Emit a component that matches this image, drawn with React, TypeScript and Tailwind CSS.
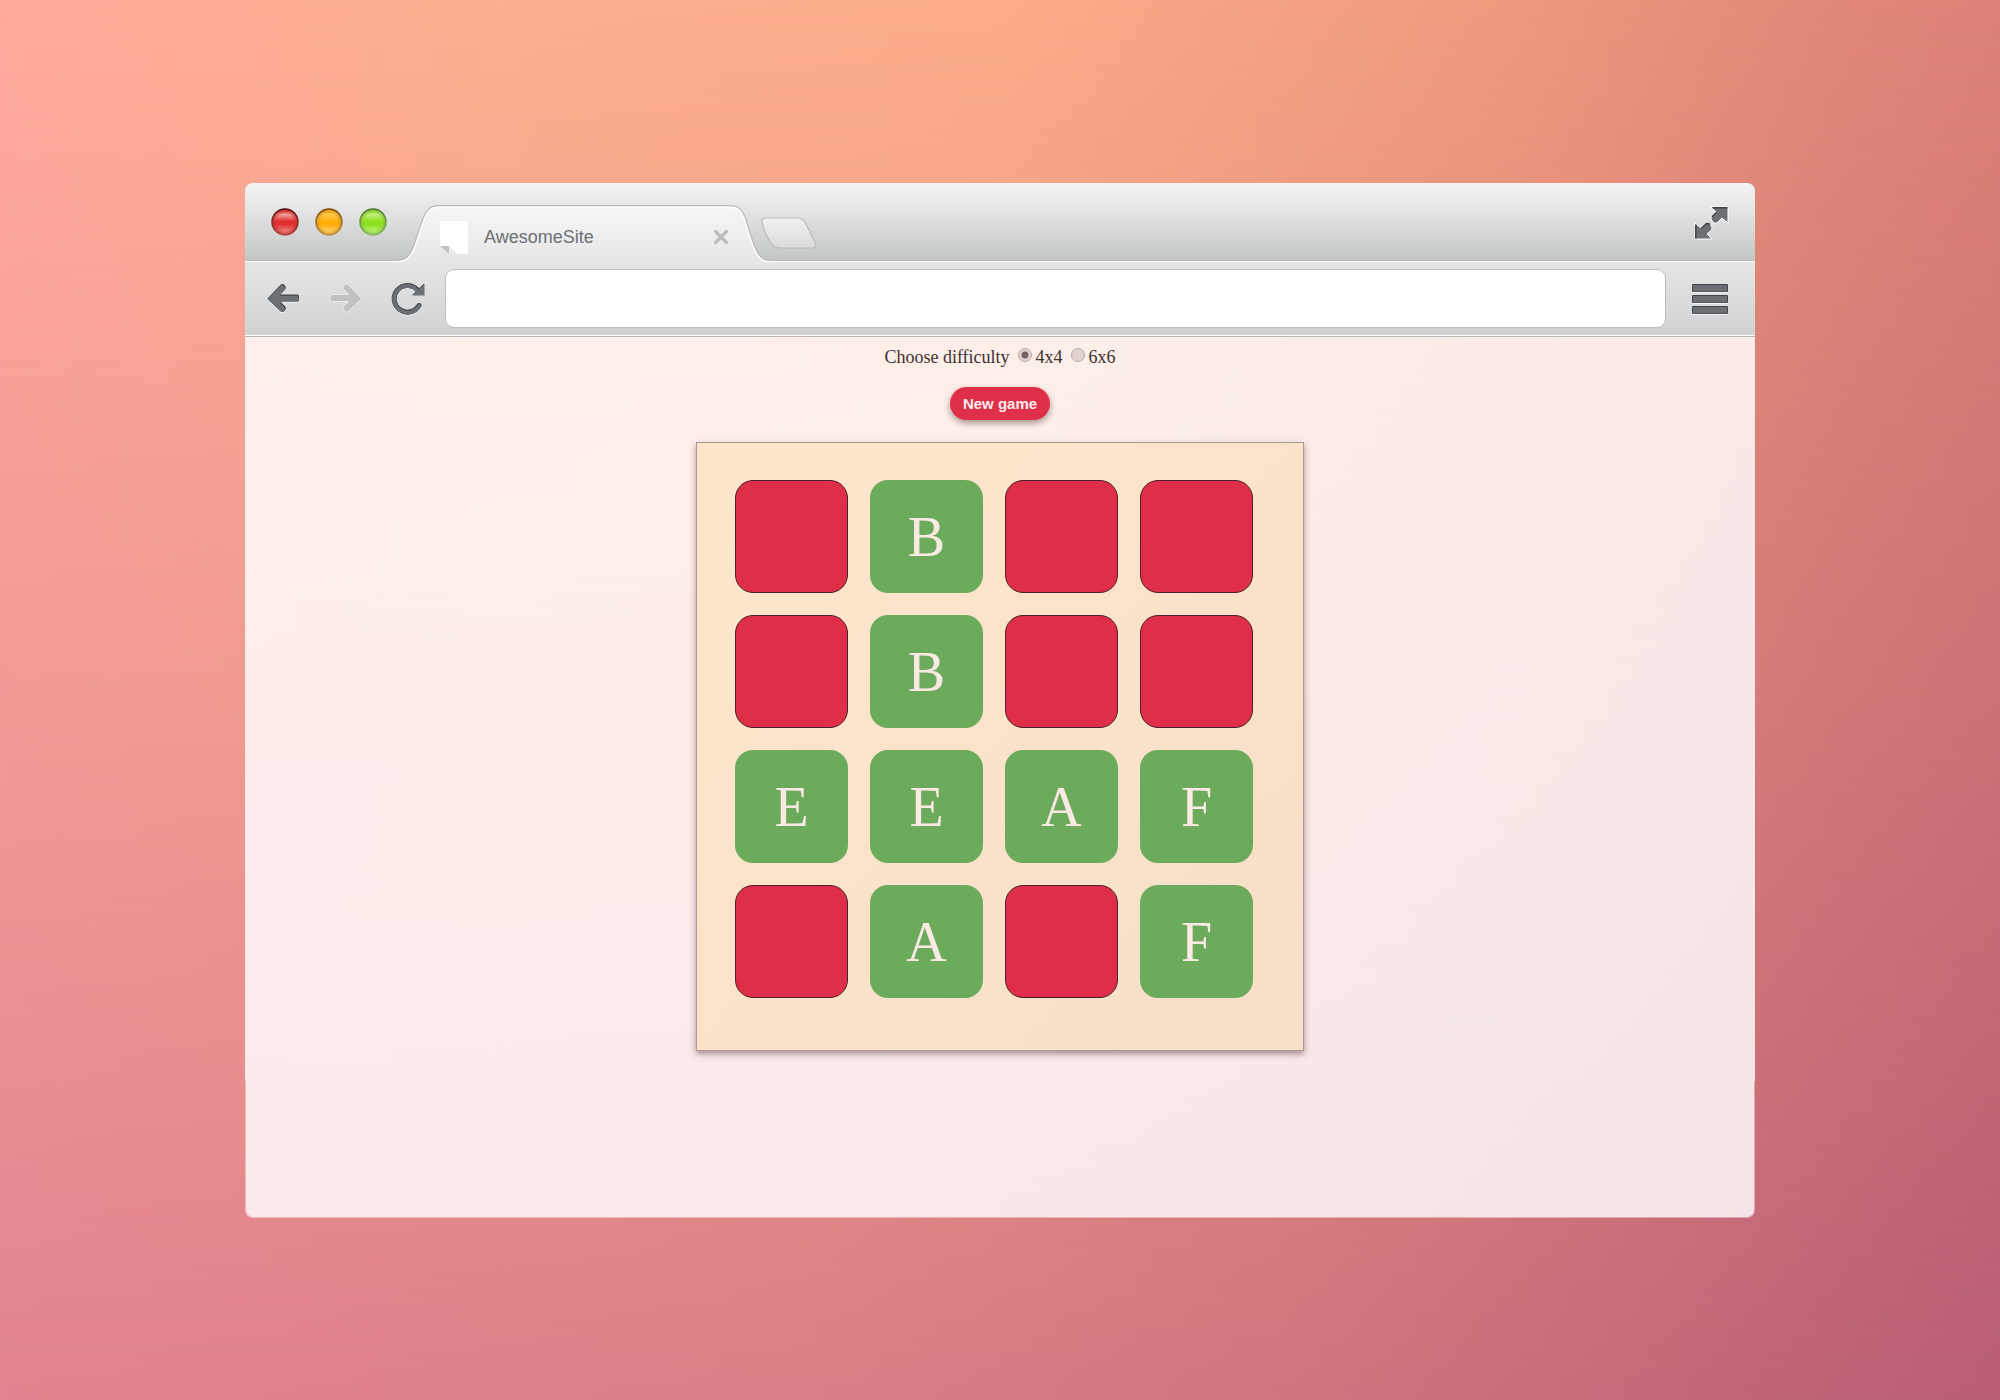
import { useState } from "react";

const startingCards = [
  "", "B", "", "",
  "", "B", "", "",
  "E", "E", "A", "F",
  "", "A", "", "F",
];

const lights = [
  { name: "Close window", id: "red", rim: "#5e0f10", top: "#f2a4a2", mid: "#e0302d", low: "#f09a98", edge: "#a83331" },
  { name: "Minimize window", id: "amber", rim: "#7d4a06", top: "#ffc94f", mid: "#ffae0a", low: "#ffd980", edge: "#b98532" },
  { name: "Zoom window", id: "green", rim: "#4d7a2c", top: "#c3f082", mid: "#8ee01c", low: "#c4f48a", edge: "#7fae55" },
];

function TrafficLight({ light }: { light: (typeof lights)[number] }) {
  return (
    <button type="button" aria-label={light.name} className="block size-7">
      <svg viewBox="0 0 28 28" className="size-7">
        <defs>
          <linearGradient id={`${light.id}-fill`} x1="0" y1="0" x2="0" y2="1">
            <stop offset="0.05" stopColor={light.mid} />
            <stop offset="0.2" stopColor={light.top} />
            <stop offset="0.48" stopColor={light.mid} />
            <stop offset="0.6" stopColor={light.mid} />
            <stop offset="0.92" stopColor={light.low} />
          </linearGradient>
          <linearGradient id={`${light.id}-rim`} x1="0" y1="0" x2="0" y2="1">
            <stop offset="0" stopColor={light.rim} />
            <stop offset="1" stopColor={light.edge} stopOpacity="0.7" />
          </linearGradient>
          <radialGradient id={`${light.id}-shade`}>
            <stop offset="0.6" stopColor={light.mid} stopOpacity="0" />
            <stop offset="1" stopColor={light.edge} stopOpacity="0.9" />
          </radialGradient>
        </defs>
        <circle cx="14" cy="14" r="13" fill={`url(#${light.id}-fill)`} />
        <circle cx="14" cy="14" r="13" fill={`url(#${light.id}-shade)`} stroke={`url(#${light.id}-rim)`} strokeWidth="1.6" />
      </svg>
    </button>
  );
}

function TabShape() {
  return (
    <svg viewBox="0 0 376 58" className="absolute inset-0 h-[58px] w-[376px]" aria-hidden="true">
      <defs>
        <linearGradient id="tab-fill" x1="0" y1="0" x2="0" y2="1">
          <stop offset="0" stopColor="#f6f6f6" />
          <stop offset="1" stopColor="#e6e6e6" />
        </linearGradient>
      </defs>
      <path
        d="M0 58V56.5H4C13 56.5 18 48 21 38L27 20C31 8 35 2 43 2H336C344 2 348 8 351 19L356 35C360 48 366 56.5 373 56.5H376V58Z"
        fill="url(#tab-fill)"
      />
      <path
        d="M0 56.5H4C13 56.5 18 48 21 38L27 20C31 8 35 2 43 2H336C344 2 348 8 351 19L356 35C360 48 366 56.5 373 56.5H376"
        fill="none"
        stroke="#ffffff"
        strokeWidth="1.5"
      />
      <path
        d="M0 55H4C12 55 17 47 20 37L26 19C30 7 34 0.6 43 0.6H336C345 0.6 349 7 352 18L357 34C361 47 367 55 373 55H376"
        fill="none"
        stroke="#b9bab9"
        strokeWidth="1.2"
      />
    </svg>
  );
}

function PageIcon() {
  return (
    <svg viewBox="0 0 28 33" className="h-[33px] w-7" aria-hidden="true">
      <path d="M0 0H28V33H17L9 25H0Z" fill="#ffffff" />
      <path d="M9 25L17 33H9Z" fill="#e9ecec" />
      <path d="M0 25H9V33Z" fill="#c2c3c3" />
    </svg>
  );
}

function CloseIcon() {
  return (
    <svg viewBox="0 0 16 16" className="size-4" aria-hidden="true">
      <path d="M2.5 2.5L13.5 13.5M13.5 2.5L2.5 13.5" stroke="#bdbdbd" strokeWidth="3.2" strokeLinecap="round" />
    </svg>
  );
}

function NewTabIcon() {
  return (
    <svg viewBox="0 0 56 32" className="h-8 w-14" aria-hidden="true">
      <defs>
        <linearGradient id="new-tab-fill" x1="0" y1="0" x2="0" y2="1">
          <stop offset="0" stopColor="#f1f1f1" />
          <stop offset="1" stopColor="#d9dadb" />
        </linearGradient>
      </defs>
      <path
        d="M4 1H36C41 1 43 3 45 7L54 25C55.5 29 55 31 52 31H19C14 31 12 29 10 26C6 20 2 11 1 5C0.5 2.5 1.5 1 4 1Z"
        fill="url(#new-tab-fill)"
        stroke="#b9bab9"
        strokeWidth="1.2"
      />
    </svg>
  );
}

const arrowPath =
  "M1 16L13.5 2.8Q15.500 1 17.2 2.800L18.300 4Q19.800 5.700 18.200 7.400L13.500 12.500H30.500Q32 12.500 32 14V18Q32 19.500 30.500 19.500H13.500L18.200 24.600Q19.800 26.300 18.300 28L17.200 29.200Q15.500 31 13.500 29.200L1 17.500Q0.300 16.700 1 16Z";

function BackIcon() {
  return (
    <svg viewBox="0 0 34 34" className="size-[34px]" aria-hidden="true">
      <clipPath id="back-clip">
        <path d={arrowPath} />
      </clipPath>
      <path d={arrowPath} transform="translate(0 1)" fill="#f4f4f4" />
      <path d={arrowPath} fill="#43464a" />
      <g clipPath="url(#back-clip)">
        <path d={arrowPath} transform="translate(-0.5 1.2)" fill="#6b7074" />
      </g>
    </svg>
  );
}

function ForwardIcon() {
  return (
    <svg viewBox="0 0 34 34" className="size-[34px]" aria-hidden="true">
      <path d={arrowPath} transform="matrix(-1 0 0 1 33 0)" fill="#c1c1c1" stroke="#ececec" strokeWidth="1" />
    </svg>
  );
}

function ReloadIcon() {
  return (
    <svg viewBox="0 0 34 34" className="size-[34px]" fill="none" aria-hidden="true">
      <path d="M28 23.500A13.300 13.300 0 1 1 26 7.500" stroke="#f2f2f2" strokeWidth="5" strokeLinecap="round" transform="translate(0 1)" />
      <path d="M28 23.500A13.300 13.300 0 1 1 26 7.500" stroke="#43464a" strokeWidth="5" strokeLinecap="round" />
      <path d="M28 24A13.300 13.300 0 1 1 26 8" stroke="#6b7074" strokeWidth="3.800" strokeLinecap="round" />
      <path d="M33.500 2V13.500H21.500V12.500L25 9L24 5.500L28.500 6.500Z" fill="#6b7074" />
      <path d="M33 2L28 6.800L25 5" stroke="#43464a" strokeWidth="1" />
    </svg>
  );
}

function MenuIcon() {
  return (
    <svg viewBox="0 0 36 32" className="h-8 w-9" aria-hidden="true">
      {[1, 12, 23].map((y) => (
        <g key={y}>
          <rect x="0" y={y + 1} width="36" height="8" rx="1" fill="#f0f0f0" />
          <rect x="0" y={y} width="36" height="8" rx="1" fill="#424548" />
          <rect x="1" y={y + 1} width="34" height="6.5" fill="#6b6f73" />
        </g>
      ))}
    </svg>
  );
}

function ExpandIcon() {
  const up = "M17 1H34V17L28 12L23 17Q20 18 18 15Q16 12 17.500 10L22 6Z";
  const down = "M1 17L7 22L12 17Q15 16 17 19Q19 22 17.500 24L13 28L18 33H1Z";
  return (
    <svg viewBox="0 0 35 34" className="h-[34px] w-[35px]" aria-hidden="true">
      <path d={up} fill="#6b7074" stroke="#ffffff" strokeWidth="1" />
      <path d={down} fill="#6b7074" stroke="#ffffff" strokeWidth="1" />
      <path d="M18.500 1.800H33.500M22.500 6.500L18 10.800" stroke="#3f4246" strokeWidth="1.500" fill="none" />
      <path d="M1.800 18.500V32.500M7 22.800L12 17.800Q14.500 17 16 18.500" stroke="#3f4246" strokeWidth="1.500" fill="none" />
    </svg>
  );
}

function Difficulty({ value, selected, onSelect }: { value: string; selected: boolean; onSelect: () => void }) {
  return (
    <label className="flex items-center gap-1">
      <input
        type="radio"
        name="difficulty"
        value={value}
        checked={selected}
        onChange={onSelect}
        className="mb-1 size-[14px] appearance-none rounded-full border border-[#b9a9a5] bg-[#e2d3cf] checked:bg-[radial-gradient(circle,#75625f_0_3px,#e2d3cf_4px)]"
      />
      {value}
    </label>
  );
}

export default function App() {
  const [size, setSize] = useState("4x4");
  const [cards, setCards] = useState(startingCards);

  return (
    <div className="relative isolate flex min-h-screen flex-col bg-[linear-gradient(to_right,#ffab9c_0%,#fbb08e_25%,#faad88_50%,#ee997e_76%,#e18879_92%,#dd8277_100%)] px-[245px] pt-[183px] pb-[182px]">
      <div className="absolute inset-0 -z-10 bg-[linear-gradient(to_right,#e2838f_0%,#db7e86_40%,#d0757e_65%,#b85d75_100%)] [mask-image:linear-gradient(to_bottom,transparent,rgba(0,0,0,0.43)_50%,black)]" />

      <div className="flex grow flex-col">
        <header>
          <div className="flex h-[78px] rounded-t-lg bg-[linear-gradient(to_bottom,#f4f4f4,#dcdedd_50%,#c1c5c4)]">
            <div className="flex items-center gap-4 border-b border-[#b9bab9] pr-2 pl-[26px]">
              {lights.map((light) => (
                <TrafficLight key={light.id} light={light} />
              ))}
            </div>
            <div className="relative -mb-0.5 flex h-[58px] w-[376px] items-center self-end pt-1.5 pr-[42px] pl-[45px]">
              <TabShape />
              <a href="#" className="relative flex grow items-center gap-4 font-['Liberation_Sans'] text-[18px] text-[#6b7074]">
                <PageIcon />
                AwesomeSite
              </a>
              <button type="button" aria-label="Close tab" className="relative block">
                <CloseIcon />
              </button>
            </div>
            <div className="flex grow items-center border-b border-[#b9bab9] pt-0.5">
              <button type="button" aria-label="New tab" className="-ml-2.5 pt-5">
                <NewTabIcon />
              </button>
              <button type="button" aria-label="Full screen" className="mr-[26px] ml-auto">
                <ExpandIcon />
              </button>
            </div>
          </div>
          <div className="flex h-[76px] items-center border-t border-white bg-[linear-gradient(to_bottom,#e6e6e6,#d0d1d3)] pr-[27px] pb-0.5 pl-[22px] shadow-[inset_0_-1px_0_#b6b7b9,inset_0_-2px_0_#ffffff]">
            <nav className="flex gap-7">
              <button type="button" aria-label="Back"><BackIcon /></button>
              <button type="button" aria-label="Forward"><ForwardIcon /></button>
              <button type="button" aria-label="Reload"><ReloadIcon /></button>
            </nav>
            <input
              type="text"
              aria-label="Address"
              className="mr-[26px] ml-5 h-[59px] min-w-0 grow rounded-[9px] border border-[#bdbebf] bg-white px-4 font-['Liberation_Sans'] text-[18px] text-[#6b7074]"
            />
            <button type="button" aria-label="Menu"><MenuIcon /></button>
          </div>
        </header>

        <main className="flex grow flex-col items-center bg-white/82 pt-2 font-['Liberation_Serif']">
          <fieldset aria-label="Difficulty" className="flex items-center gap-2 text-[18px] leading-6 text-[#3f3230]">
            <span>Choose difficulty</span>
            <Difficulty value="4x4" selected={size === "4x4"} onSelect={() => setSize("4x4")} />
            <Difficulty value="6x6" selected={size === "6x6"} onSelect={() => setSize("6x6")} />
          </fieldset>
          <button
            type="button"
            onClick={() => setCards(startingCards)}
            className="mt-[18px] h-[33px] rounded-full bg-[#e02f4b] px-[13px] pt-px font-['Liberation_Sans'] text-[15px] font-bold text-[#fdeeec] shadow-[0_3px_6px_rgba(60,30,30,0.45)]"
          >
            New game
          </button>
          <section
            aria-label="Board"
            className="mt-[22px] grid grid-cols-[repeat(4,113px)] gap-[22px] border border-[#ad9a94] bg-[linear-gradient(135deg,#fce6cb,#fae3ca_50%,#f6dfc8)] pt-[37px] pr-[50px] pb-[52px] pl-[38px] shadow-[0_3px_6px_rgba(90,50,60,0.5)]"
          >
            {cards.map((letter, index) =>
              letter ? (
                <button
                  key={index}
                  type="button"
                  className="size-[113px] rounded-[18px] bg-[#6bab5b] text-[56px] leading-none text-[#fbeae4]"
                >
                  {letter}
                </button>
              ) : (
                <button
                  key={index}
                  type="button"
                  aria-label="Hidden card"
                  className="size-[113px] rounded-[18px] border border-[#4c2026] bg-[#df2e4a]"
                />
              ),
            )}
          </section>
        </main>
        <footer className="h-[137px] rounded-b-lg border border-t-0 border-white/40 bg-white/82 bg-clip-padding" />
      </div>
    </div>
  );
}
